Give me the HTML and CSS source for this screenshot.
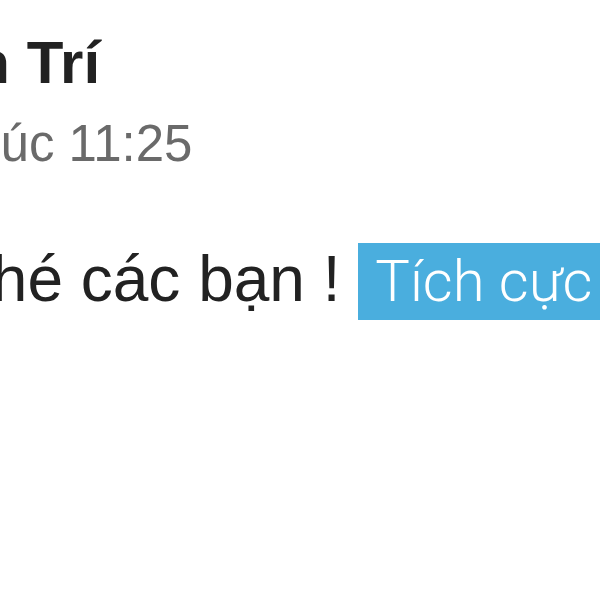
FILE: index.html
```html
<!DOCTYPE html>
<html lang="vi">
<head>
  <meta charset="UTF-8">
  <meta name="viewport" content="width=device-width, initial-scale=1.0">
  <title>Bài viết</title>
  <link rel="stylesheet" href="styles.css">
</head>
<body>
  <div class="post">
    <div class="post-header">
      <div class="author">Nguyễn Trí</div>
      <div class="time">Hôm nay lúc 11:25</div>
    </div>
    <p class="message">Chúc một ngày vui vẻ nhé các bạn ! <span class="tag">Tích cực</span></p>
  </div>
</body>
</html>
```

FILE: styles.css
```css
html, body {
  margin: 0;
  width: 600px;
  height: 600px;
  overflow: hidden;
  background-color: #fff;
  font-family: "Liberation Sans", Arial, sans-serif;
}
.post {
  display: flex;
  flex-direction: column;
  padding-top: 28px;
}
.post-header {
  display: flex;
  flex-direction: column;
  gap: 18px;
}
.author, .time, .message {
  white-space: nowrap;
}
.author {
  font-size: 60px;
  font-weight: bold;
  line-height: 1.15;
  color: #222;
  margin-left: -210px;
}
.time {
  font-size: 51px;
  line-height: 1.15;
  color: #6a6a6a;
  margin-left: -229px;
}
.message {
  margin: 69px 0 0 -677px;
  font-size: 64px;
  line-height: 1.1;
  color: #222;
}
.tag {
  display: inline-block;
  background-color: #4aaede;
  color: #fff;
  font-family: Roboto, "Liberation Sans", sans-serif;
  font-weight: 300;
  font-size: 58px;
  line-height: 77px;
  padding: 0 18px 0 17px;
}
```
